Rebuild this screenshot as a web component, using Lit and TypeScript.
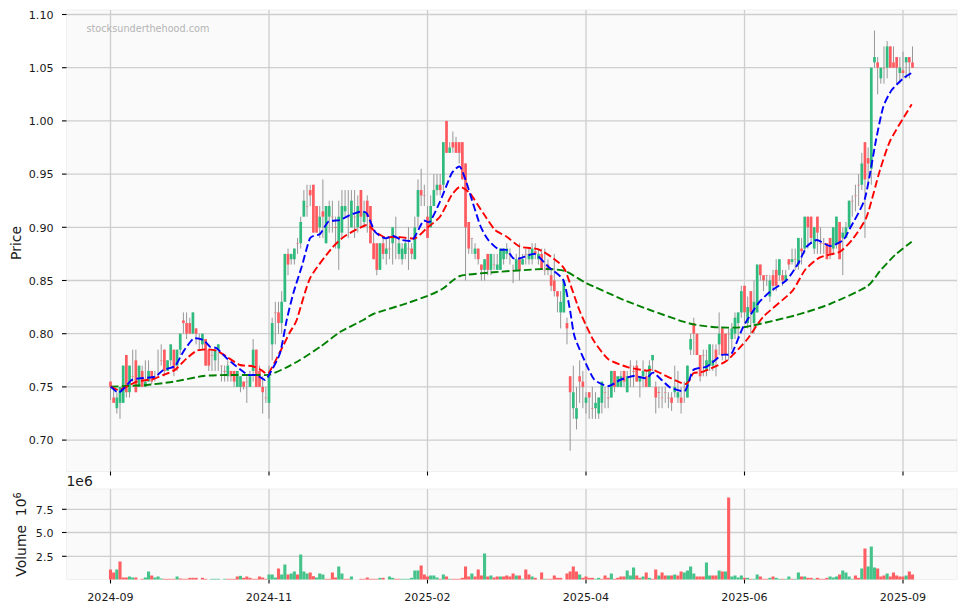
import { LitElement, html, svg, css } from "lit";
import { customElement } from "lit/decorators.js";

const X0 = 110.5, DX = 3.17;
const cx = (i: number) => X0 + DX * i;
const py = (u: number) => 14.5 + (220 - u) * 5.32;

// kind body-top body-bottom high low, in price steps of 0.005
const CANDLES = `r 151 150 151 147.5|r 148 147 150 147|g 148 146 149 145|g 150 147 150 144|g 154 147 154 147|r 156 149 156 148|g 154 149 154 148|d 152 152 157 151|r 155 149 157 149|g 154 150 154 150|r 153 150 154 150|g 151 150 155 150|g 153 151 155 151|r 153 151 153 150.5|d 152 152 153 151|d 152 152 157 152|d 155 155 158 154|r 157 153 157 152|g 155 153 155 153|g 158 155 158 154|r 157 153 157 152|g 157 154 157 153|g 160 157 160 156|r 162.5 162 164 160|r 162 160 164 159|r 162 160 163 160|g 164 160 164 160|r 161 160 161 158|d 159 159 160 157|g 160 158 160 157|r 159 154 159 154|r 157 154 157 153|d 156 156 157 153|g 157 155 157 153|g 158 157 158 153|d 154 154 154 151|r 153 153 154 151|g 154 152 155 151|r 153 152 153 151|r 153 151 153 150|g 153 150 153 150|g 152 150 152 149|r 151 150 151 149.5|d 151 151 152 147|g 152 150 153 150|g 157 153 159 151|r 157 150 157 150|r 153 150 154 150|r 150 149 152 145|d 148 148 150 147|g 152 147 154 144|g 162 158 163 155|d 164 164 166 158|r 164 162 166 160|g 166 162 168 160|g 175 166 175 166|r 175 173 176 171|g 175 174 175 173|g 176 174 176 173|d 177 177 178 175|g 181 177 182 176|g 185 182 187 182|d 184 184 188 182|r 187 186 188 184|r 188 179 188 179|r 184 179 184 179|g 182 180 184 178|r 183 182 189 178|g 184 177 184 177|g 184 182 185 179|d 182 182 185 179|r 180 180 182 176|g 182 176 185 172|g 184 179 187 178|g 184 183 187 182|d 182 182 187 178|g 185 180 187 180|d 182 182 187 178|g 184 180 186 179|r 187 182 187 180|g 183 181 185 180|r 185 182 186 179|r 184 177 184 177|r 177 174 179 174|r 177 172 177 171|g 177 172 177 172|r 177 175 178 174|g 176 175 178 173|d 176 176 178 174|g 180 177 180 173|d 178 178 182 174|g 177 175 178 174|g 176 174 177 173|g 177 175 178 174|d 176 176 180 172|r 176 175 177 174|g 180 174 182 174|g 187 182 189 180|r 187 186 191 184|d 186 186 188 184|r 182 178 184 178|g 184 180 186 180|g 187 184 190 184|g 188 187 190 186|r 188 187 190 186|g 196 188 196 187|r 200 194 200 194|g 195 194 196 194|r 196 195 198 194|r 196 194 197 194|r 196 194 196 192|r 196 189 196 189|r 192 180 192 170|r 181 176 181 175|d 178 178 178 175|g 176 175 177 174|r 176 174 176 173|r 173 172 173 170|g 174 172 174 170|r 175 172 175 171|g 175 172 175 171|d 173 173 175 172|g 173 172 175 172|g 176 172 176 172|g 176 174 176 173|g 176 175 177 174|d 175 175 176 173|d 172 172 173 169.5|g 174 172 175 172|r 174 172 177 170|g 174 173 175 173|d 175 175 176 173|g 175 174 176 173|g 176 174 177 173|r 175.5 175 177 174|g 175 174 176 173|r 175 172 176 172|d 172 172 176 171|r 173 172 174 171|r 171 169 172 168|r 170 168 175 167|r 168 167 168 164|g 166 164 168 161|g 170 164 170 164|r 162 161 163 158|r 152 149 152 138|g 149 146 154 144|g 146 144 150 142|r 152 151 155 147|r 151 150 153 146|g 148 147 149 145|r 149 148 149 144|d 146 146 150 144|g 147 146 149 144|g 148 145 148 144|g 151 147 151 145|d 149 149 150 146|r 148 148 150 146|g 153 148 153 148|r 153 150 153 149|g 152 150 152 150|g 152 150 153 150|r 153 151 153 150|g 152 149 153 149|d 154 154 155 150|r 153 153 154 150|r 154 151 155 151|g 152 151 152 148|g 153 152 155 150|r 152 150 153 150|g 154 150 155 150|g 156 155 156 153|r 150 148 151 145|r 149 149 150 146|d 148 148 150 146|d 149 149 150 147|d 148 148 149 146|r 148 147 149 145.5|g 150 149 154 148|g 149 148 153 147|r 148 147 150 145|d 150 150 151 147|g 154 148 154 148|g 159 157 160 156|r 162 160 163 156|r 160 156 160 156|r 156 152 156 151|d 156 156 157 152|g 155 153 157 152|g 158 154 158 153|g 155 154 158 153|r 157 155 158 152|g 160 158 164 156|r 161 156 161 155|r 160 156 160 155|d 160 160 161 155|g 161 159 162 157|g 163 160 164 159|g 164 162 164 159|g 168 164 169 163|r 169 164 169 162|g 165 162 167 161|r 168 164 168 160|g 166 162 170 160|g 173 164 173 164|r 173 171 173 170|r 171 170 171 168|d 171 171 171 169|g 170 167 171 166|r 171 169 172 168|r 172 169 174 168|g 174 171 174 170|r 171 170 172 169|g 171 170 172 170|r 174 173 174 172|g 174 173.5 176 173|d 174 174 176 172|g 178 173 178 172|r 176 175.5 178 173|g 182 176 182 175|r 182 180 182 176|r 182 178 182 177|g 180 176 180 175|r 182 179 182 175|d 177 177 180 175|d 177 177 178 175|r 177 174 177 174|r 178 175 178 174|g 180 176 180 175|g 182 177 182 176|r 181 174 181 174|g 179 178 180 171|g 180 178 181 178|g 185 180 185 180|d 185 185 186 182|d 186 186 188 183|d 188 188 190 184|g 192 188 194 187|r 196 189 196 178|r 193 192 195 188|g 210 191 210 188|g 212 211 217 210|r 211 210 212 205|g 210 208 210 207|d 210 210 214 207|g 214 210 215 208|r 214 210 214 210|r 211 210 214 210|r 212 210 212 207|g 210 209 212 207|r 209.5 209 213 208|g 212 211 212 208|r 212 211 212 208|r 211 210 214 210`
  .split("|")
  .map((row) => {
    const [k, t, b, h, l] = row.split(" ");
    return { k, t: +t, b: +b, h: +h, l: +l };
  });

// bar height in thirds of a pixel; negative means a green bar
const VOLUMES = [
  30,21,-30,54,6,6,-9,-6,6,0,2,-6,-24,12,-6,-9,-3,2,2,2,2,-9,3,2,2,5,5,5,0,5,2,0,-2,-2,-2,0,-2,2,2,2,9,-11,5,9,5,2,2,9,6,2,
  -15,-15,-6,33,-15,-45,15,-18,-24,15,-75,-24,-18,21,10,-6,-18,-15,2,2,21,6,-39,-18,2,2,-9,0,0,2,2,6,2,2,2,-5,5,0,-9,-5,
  2,2,-2,-2,-2,-5,-27,-27,42,15,9,-12,-12,-6,2,-15,9,-2,2,2,2,5,39,9,-18,9,30,12,-78,9,-12,6,9,-9,9,12,9,18,-12,12,-2,30,15,-9,5,0,21,-2,2,2,12,5,5,0,
  18,24,39,24,-15,5,9,5,5,-2,-5,2,12,5,-18,2,5,9,9,-27,-12,-36,12,5,-9,21,-5,2,30,-12,21,12,-12,12,-15,12,24,-21,-27,-39,-18,9,9,9,-51,-12,12,12,-27,24,-24,246,
  -9,-12,-6,-12,5,-5,2,-2,-15,9,2,2,-5,9,-5,-2,2,-2,-9,2,-2,-21,9,-9,5,5,-2,5,2,2,5,-9,-6,-9,15,-27,-21,-9,-2,12,5,-33,93,-39,-99,-36,33,9,12,-18,9,21,12,9,9,-12,24,15,
];

const BLUE: number[][] = [[110.7,386.7],[118.3,392.7],[125,387.3],[131.7,380],[140,378.3],[155,376.7],[163.3,370],[175,366],[183.3,351.7],[193.3,338.7],[203.3,340],[210,346.7],[216.7,348.3],[226.7,358.3],[240,369.3],[248.3,375],[256.7,375],[265,380],[270,373.3],[280,353.3],[286.7,320],[293.3,293.3],[301.7,266.7],[310,238.3],[320,234],[328.3,221.7],[340,220],[350,215],[360,211.7],[366.7,213.3],[375,231.7],[385,238.3],[393.3,236],[401.7,240],[411.7,240.7],[416.7,233.3],[423.3,220.7],[430,221.7],[440,201.7],[451.7,173.3],[460,166.7],[466.7,183.3],[480,225],[488.3,240],[498.3,249.3],[506.7,250],[513.3,258.3],[520,258.3],[535,254],[548.3,266.7],[563.3,280],[570,310],[575,338],[593.3,378.3],[608.3,386],[620,380],[633.3,376],[646.7,378.3],[653.3,372.7],[670,387.3],[685,390.7],[693.3,370],[706.7,366.7],[721.7,355],[731.7,353.3],[743.3,326.7],[758.3,303.3],[770,291.7],[786.7,280],[798.3,263.3],[806.7,246.7],[816.7,240],[830,246],[843.3,240],[850,228.3],[865,198.3],[876,140],[883.3,106.7],[891.7,90],[903.3,78.3],[912.7,72.3]];
const RED: number[][] = [[110.7,386.7],[118.3,390],[126.7,386.7],[136.7,381.7],[153.3,379],[163.3,375],[175,370],[186.7,358.3],[196.7,350.7],[206.7,349.3],[216.7,350.7],[226.7,356.7],[240,365],[251.7,366],[260,369.3],[268.3,373.3],[280,352],[290,332],[296.7,320],[310,278.3],[331.7,248.3],[345,236],[366.7,225],[375,231.7],[385,237.3],[396.7,236.7],[415,238.3],[426.7,228.3],[440,216.7],[451.7,195],[460,186.7],[470,193.3],[483.3,213.3],[495,230],[506.7,236.7],[520,246.7],[538.3,249.3],[553.3,258.3],[565,270],[579.3,310],[593.3,340],[608.3,359.3],[628.3,367.3],[646.7,370.7],[653.3,370],[685,384],[693.3,373.3],[703.3,371.7],[726.7,360.7],[746.7,340],[763.3,316.7],[791.7,291.7],[805,270],[820,257.3],[840,251.7],[853.3,238.3],[866.7,216.7],[880,170],[890.5,140],[911.7,104.3]];
const GREEN: number[][] = [[110.7,386.7],[126.7,386],[146.7,385],[173.3,381.7],[203.3,376],[226.7,375],[256.7,375],[270,374.7],[286.7,367.3],[300,360],[320,347],[340,332],[363.3,320],[373.3,314],[406.7,303.3],[430,295],[443.3,288.3],[460,276],[493.3,272.3],[543.3,269],[565,271],[586.7,283.3],[620,298.3],[650,310],[683.3,321.7],[696.7,325],[720,327.5],[746.7,326.7],[796.7,315],[830,304],[866.7,286.7],[880,271],[895,255],[911.7,241.7]];

function smooth(p: number[][]): string {
  const k = 10;
  let d = `M${p[0][0]} ${p[0][1]}`;
  for (let i = 0; i < p.length - 1; i++) {
    const a = p[Math.max(i - 1, 0)], b = p[i], c = p[i + 1], e = p[Math.min(i + 2, p.length - 1)];
    const c1 = [b[0] + (c[0] - a[0]) / k, b[1] + (c[1] - a[1]) / k];
    const c2 = [c[0] - (e[0] - b[0]) / k, c[1] - (e[1] - b[1]) / k];
    d += `C${c1[0].toFixed(1)} ${c1[1].toFixed(1)} ${c2[0].toFixed(1)} ${c2[1].toFixed(1)} ${c[0]} ${c[1]}`;
  }
  return d;
}

const PRICE_TICKS = ["1.10", "1.05", "1.00", "0.95", "0.90", "0.85", "0.80", "0.75", "0.70"];
const DATE_TICKS = ["2024-09", "2024-11", "2025-02", "2025-04", "2025-06", "2025-09"];
const VOL_TICKS: [string, number][] = [["7.5", 509.3], ["5.0", 532.5], ["2.5", 556.3]];

const L = 66.5, R = 957, T1 = 10, B1 = 471.5, T2 = 489, B2 = 579.5;

@customElement("app-root")
export class AppRoot extends LitElement {
  static styles = css`
    :host { display: block; width: 966px; height: 611px; background: #fff; }
    svg { display: block; }
    .pane { fill: #fafafa; stroke: #f0f0f0; stroke-width: 1.1; }
    .grid { stroke: #cecece; stroke-width: 1.3; fill: none; }
    .tick { stroke: #000; stroke-width: 1.1; }
    .wick { stroke: #929292; stroke-width: 0.95; }
    .body-r { fill: #ff5a5f; }
    .body-g { fill: #2fbb7e; }
    .body-d { fill: #e88; }
    .vol-r { fill: #ff5f62; }
    .vol-g { fill: #45c38b; }
    .ma { fill: none; stroke-width: 1.9; stroke-dasharray: 7.7 3.3; }
    .ma-b { stroke: #0000ff; }
    .ma-r { stroke: #ff0000; }
    .ma-g { stroke: #008000; }
    text { font-family: "DejaVu Sans", sans-serif; fill: #1a1a1a; }
    .lab { font-size: 11.1px; }
    .end { text-anchor: end; }
    .mid { text-anchor: middle; }
    .axis { font-size: 13.9px; text-anchor: middle; }
    .exp { font-size: 13.9px; }
    .sup { font-size: 9.7px; }
    .mark { font-size: 9.7px; fill: #b4b4b4; }
  `;

  render() {
    const pw = 2.7, vw = 3.1;
    return html`<svg width="966" height="611" viewBox="0 0 966 611">
      <rect class="pane" x=${L} y=${T1} width=${R - L} height=${B1 - T1}></rect>
      <rect class="pane" x=${L} y=${T2} width=${R - L} height=${B2 - T2}></rect>

      ${PRICE_TICKS.map((t, i) => {
        const y = 14.5 + i * 53.2;
        return svg`<line class="grid" x1=${L} x2=${R} y1=${y} y2=${y}></line>
          <line class="tick" x1="62" x2=${L} y1=${y} y2=${y}></line>
          <text class="lab end" x="53.5" y=${y + 4.2}>${t}</text>`;
      })}
      ${VOL_TICKS.map(([t, y]) => svg`<line class="grid" x1=${L} x2=${R} y1=${y} y2=${y}></line>
          <line class="tick" x1="62" x2=${L} y1=${y} y2=${y}></line>
          <text class="lab end" x="53.5" y=${y + 4.2}>${t}</text>`)}
      ${DATE_TICKS.map((t, i) => {
        const x = X0 + i * 158.5;
        return svg`<line class="grid" x1=${x} x2=${x} y1=${T1} y2=${B1}></line>
          <line class="grid" x1=${x} x2=${x} y1=${T2} y2=${B2}></line>
          <line class="tick" x1=${x} x2=${x} y1=${B1} y2=${B1 + 4}></line>
          <line class="tick" x1=${x} x2=${x} y1=${B2} y2=${B2 + 4}></line>
          <text class="lab mid" x=${x} y="600.5">${t}</text>`;
      })}

      ${CANDLES.map((c, i) => svg`<line class="wick" x1=${cx(i)} x2=${cx(i)} y1=${py(c.h)} y2=${py(c.l)}></line>`)}
      ${CANDLES.map((c, i) => svg`<rect class="body-${c.k}" x=${cx(i) - pw / 2} width=${pw}
          y=${py(c.t)} height=${Math.max(py(c.b) - py(c.t), 0.7)}></rect>`)}

      ${VOLUMES.map((v, i) => {
        const h = Math.abs(v) / 3;
        return h === 0 ? null : svg`<rect class=${v < 0 ? "vol-g" : "vol-r"} x=${cx(i) - vw / 2} width=${vw} y=${B2 - h} height=${h}></rect>`;
      })}

      <path class="ma ma-g" d=${smooth(GREEN)}></path>
      <path class="ma ma-r" d=${smooth(RED)}></path>
      <path class="ma ma-b" d=${smooth(BLUE)}></path>

      <text class="mark" x="86.5" y="31.5">stocksunderthehood.com</text>
      <text class="exp" x="66.5" y="486">1e6</text>
      <text class="axis" transform="translate(21 243) rotate(-90)">Price</text>
      <text class="axis" transform="translate(26 534.5) rotate(-90)">Volume${"\u00a0\u00a0"}10<tspan class="sup" dy="-5">6</tspan></text>
    </svg>`;
  }
}
